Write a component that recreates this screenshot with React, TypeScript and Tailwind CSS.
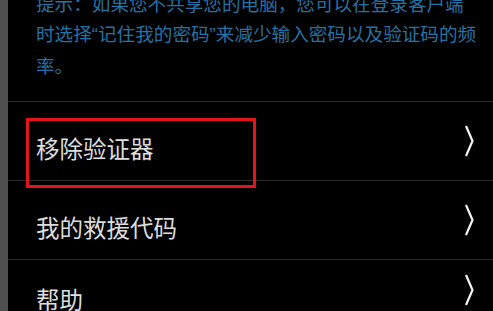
const cjk = { fontFamily: '"Noto Sans CJK SC", "Noto Sans", sans-serif' };

function Chevron() {
  return (
    <svg width="10" height="32" viewBox="0 0 10 32" className="shrink-0">
      <polyline points="2,1 8.5,16 2,31" fill="none" stroke="#f2f2f2" strokeWidth="2.2" strokeLinejoin="round" />
    </svg>
  );
}

function MenuRow({ label, last, highlight }: { label: string; last?: boolean; highlight?: boolean }) {
  return (
    <div
      className={`relative flex shrink-0 items-center justify-between pl-[28px] pr-[19px] ${
        last ? 'flex-1' : 'h-[79px] border-b border-[#2a2a2a]'
      }`}
    >
      <span className={`text-[23.5px] leading-none text-[#dedede] ${last ? 'pt-[28px]' : 'pt-[16px]'}`}>{label}</span>
      <span className={last ? 'pt-[8px]' : ''}>
        <Chevron />
      </span>
      {highlight && (
        <div className="pointer-events-none absolute left-[18px] top-[16px] h-[70px] w-[230px] border-[3px] border-[#e5141c]" />
      )}
    </div>
  );
}

export default function App() {
  return (
    <div className="flex h-[311px] w-[493px] overflow-hidden bg-black" style={cjk}>
      <div className="w-[8px] shrink-0 bg-[#4f4f4f]" />
      <div className="flex flex-1 flex-col">
        <div className="h-[102px] shrink-0 overflow-hidden border-b border-[#2a2a2a] pl-[28px]">
          <div className="-mt-[12px] whitespace-nowrap text-[18.6px] leading-[30px] text-[#2672a6]">
            <div>提示：如果您不共享您的电脑，您可以在登录客户端</div>
            <div>
              时选择<span style={{ fontFamily: '"Liberation Sans", sans-serif' }}>“</span>记住我的密码
              <span style={{ fontFamily: '"Liberation Sans", sans-serif' }}>”</span>来减少输入密码以及验证码的频
            </div>
            <div>率。</div>
          </div>
        </div>
        <MenuRow label="移除验证器" highlight />
        <MenuRow label="我的救援代码" />
        <MenuRow label="帮助" last />
      </div>
    </div>
  );
}
